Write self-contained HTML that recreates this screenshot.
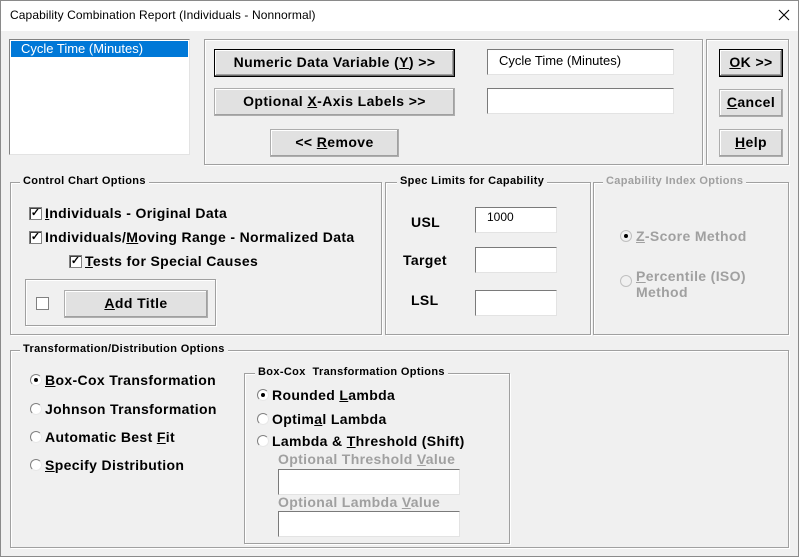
<!DOCTYPE html>
<html><head><style>
*{box-sizing:border-box;margin:0;padding:0}
body{width:799px;height:557px;background:#f0f0f0;font-family:"Liberation Sans",Arial,sans-serif;position:relative;overflow:hidden;color:#000}
.a{position:absolute}
.win{left:0;top:0;width:799px;height:557px;border:1px solid #8a8a8a}
.title{left:1px;top:1px;width:797px;height:30px;background:#fff}
.grp{position:absolute;border:1px solid #a0a0a0;box-shadow:inset 1px 1px 0 #fff,1px 1px 0 #fff}
.gl{position:absolute;background:#f0f0f0;font-weight:bold;font-size:11px;padding:0 3px;line-height:13px;letter-spacing:0.35px}
.btn{position:absolute;background:#e1e1e1;border:1px solid #adadad;box-shadow:inset -1px -1px 0 #a0a0a0,inset 1px 1px 0 #fff;font-weight:bold;font-size:14px;letter-spacing:0.4px;text-align:center;line-height:25px;white-space:nowrap}
.def{border:1px solid #000;box-shadow:inset -1px -1px 0 #696969,inset 1px 1px 0 #fff,inset -2px -2px 0 #a0a0a0}
.tb{position:absolute;background:#fff;border:1px solid #7a7a7a;border-right-color:#e3e3e3;border-bottom-color:#e3e3e3;font-size:13px;padding:3px 0 0 11px}
.t{position:absolute;font-weight:bold;font-size:14px;letter-spacing:0.35px;white-space:nowrap;line-height:15px}
.cb{position:absolute;width:13px;height:13px;background:#fff;border:1px solid #808080;box-shadow:inset 1px 1px 0 #404040;font-size:11px;line-height:11px;text-align:center;font-weight:bold}
.rd{position:absolute;width:12px;height:12px;border-radius:50%;background:#fff;border:1px solid #808080;border-right-color:#e8e8e8;border-bottom-color:#e8e8e8}
.rd.on::after{content:"";position:absolute;left:3px;top:3px;width:4px;height:4px;border-radius:50%;background:#000}
.dis{color:#a0a0a0}
u{text-decoration:underline}
</style></head><body>
<div class="a win"></div>
<div class="a title"></div>
<div class="a" style="left:10px;top:8px;font-size:12px;letter-spacing:0.1px">Capability Combination Report (Individuals - Nonnormal)</div>
<svg class="a" style="left:778px;top:9px" width="12" height="12"><path d="M1 1L11 11M11 1L1 11" stroke="#000" stroke-width="1.1"/></svg>

<div class="a" style="left:9px;top:39px;width:181px;height:116px;background:#fff;border:1px solid #828282;border-right-color:#e3e3e3;border-bottom-color:#e3e3e3"></div>
<div class="a" style="left:11px;top:41px;width:177px;height:16px;background:#0078d7;color:#fff;font-size:13px;padding-left:10px;line-height:16px">Cycle Time (Minutes)</div>

<div class="grp" style="left:204px;top:39px;width:499px;height:126px"></div>
<div class="btn def" style="left:214px;top:49px;width:241px;height:28px">Numeric Data Variable (<u>Y</u>) &gt;&gt;</div>
<div class="btn" style="left:214px;top:88px;width:241px;height:28px">Optional <u>X</u>-Axis Labels &gt;&gt;</div>
<div class="btn" style="left:270px;top:129px;width:129px;height:28px">&lt;&lt; <u>R</u>emove</div>
<div class="tb" style="left:487px;top:49px;width:187px;height:26px">Cycle Time (Minutes)</div>
<div class="tb" style="left:487px;top:88px;width:187px;height:26px"></div>

<div class="grp" style="left:706px;top:39px;width:83px;height:126px"></div>
<div class="btn def" style="left:719px;top:49px;width:64px;height:28px"><u>O</u>K &gt;&gt;</div>
<div class="btn" style="left:719px;top:89px;width:64px;height:28px"><u>C</u>ancel</div>
<div class="btn" style="left:719px;top:129px;width:64px;height:28px"><u>H</u>elp</div>

<div class="grp" style="left:10px;top:182px;width:372px;height:153px"></div>
<div class="gl" style="left:20px;top:175px">Control Chart Options</div>
<div class="cb" style="left:29px;top:207px">✓</div><div class="t" style="left:45px;top:206px"><u>I</u>ndividuals - Original Data</div>
<div class="cb" style="left:29px;top:231px">✓</div><div class="t" style="left:45px;top:230px">Individuals/<u>M</u>oving Range - Normalized Data</div>
<div class="cb" style="left:69px;top:255px">✓</div><div class="t" style="left:85px;top:254px"><u>T</u>ests for Special Causes</div>
<div class="grp" style="left:25px;top:279px;width:191px;height:47px"></div>
<div class="cb" style="left:36px;top:297px;box-shadow:none"></div>
<div class="btn" style="left:64px;top:290px;width:144px;height:28px"><u>A</u>dd Title</div>

<div class="grp" style="left:385px;top:182px;width:206px;height:153px"></div>
<div class="gl" style="left:397px;top:175px">Spec Limits for Capability</div>
<div class="t" style="left:411px;top:215px">USL</div>
<div class="tb" style="left:475px;top:207px;width:82px;height:26px;padding-top:2px;font-size:12px">1000</div>
<div class="t" style="left:403px;top:253px">Target</div>
<div class="tb" style="left:475px;top:247px;width:82px;height:26px"></div>
<div class="t" style="left:411px;top:293px">LSL</div>
<div class="tb" style="left:475px;top:290px;width:82px;height:26px"></div>

<div class="grp" style="left:593px;top:182px;width:196px;height:153px"></div>
<div class="gl dis" style="left:603px;top:175px">Capability Index Options</div>
<div class="rd on" style="left:620px;top:230px;background:#f0f0f0;border-color:#c0c0c0"></div>
<div class="t dis" style="left:636px;top:229px"><u>Z</u>-Score Method</div>
<div class="rd" style="left:620px;top:275px;background:#f0f0f0;border-color:#c0c0c0"></div>
<div class="t dis" style="left:636px;top:268px;line-height:16px"><u>P</u>ercentile (ISO)<br>Method</div>

<div class="grp" style="left:10px;top:350px;width:779px;height:198px"></div>
<div class="gl" style="left:20px;top:343px">Transformation/Distribution Options</div>
<div class="rd on" style="left:30px;top:374px"></div><div class="t" style="left:45px;top:373px"><u>B</u>ox-Cox Transformation</div>
<div class="rd" style="left:30px;top:403px"></div><div class="t" style="left:45px;top:402px">Johnson Transformation</div>
<div class="rd" style="left:30px;top:431px"></div><div class="t" style="left:45px;top:430px">Automatic Best <u>F</u>it</div>
<div class="rd" style="left:30px;top:459px"></div><div class="t" style="left:45px;top:458px"><u>S</u>pecify Distribution</div>

<div class="grp" style="left:244px;top:373px;width:266px;height:171px"></div>
<div class="gl" style="left:255px;top:366px">Box-Cox&nbsp; Transformation Options</div>
<div class="rd on" style="left:257px;top:389px"></div><div class="t" style="left:272px;top:388px">Rounded <u>L</u>ambda</div>
<div class="rd" style="left:257px;top:413px"></div><div class="t" style="left:272px;top:412px">Optim<u>a</u>l Lambda</div>
<div class="rd" style="left:257px;top:435px"></div><div class="t" style="left:272px;top:434px">Lambda &amp; <u>T</u>hreshold (Shift)</div>
<div class="t dis" style="left:278px;top:452px">Optional Threshold <u>V</u>alue</div>
<div class="tb" style="left:278px;top:469px;width:182px;height:26px"></div>
<div class="t dis" style="left:278px;top:495px">Optional Lambda <u>V</u>alue</div>
<div class="tb" style="left:278px;top:511px;width:182px;height:26px"></div>
</body></html>
